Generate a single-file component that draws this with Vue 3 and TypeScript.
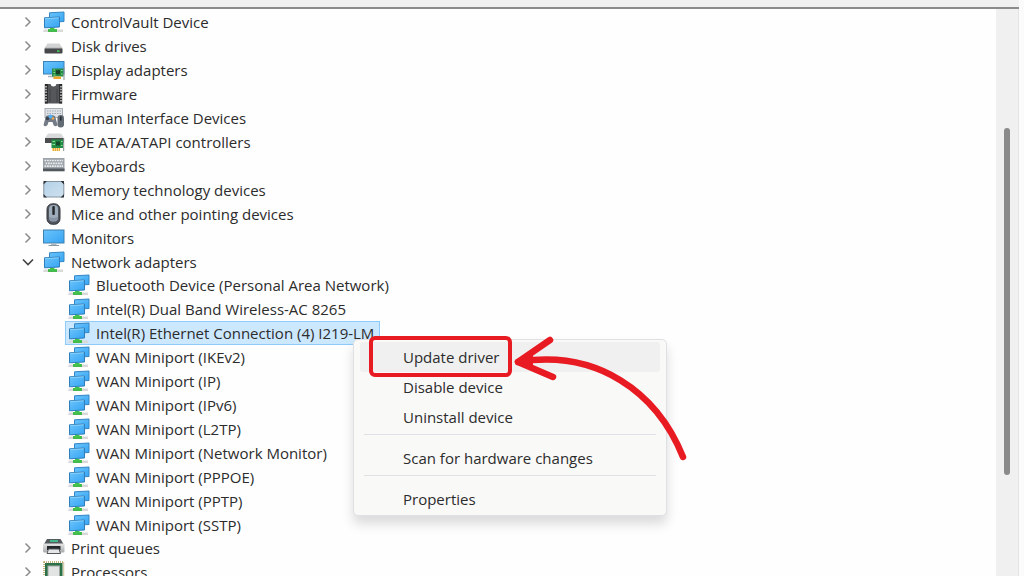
<script setup lang="ts">
import { ref } from 'vue'

interface Category {
  label: string
  icon: string
  children?: string[]
}

const categories: Category[] = [
  { label: 'ControlVault Device', icon: 'network' },
  { label: 'Disk drives', icon: 'disk' },
  { label: 'Display adapters', icon: 'display' },
  { label: 'Firmware', icon: 'firmware' },
  { label: 'Human Interface Devices', icon: 'hid' },
  { label: 'IDE ATA/ATAPI controllers', icon: 'ide' },
  { label: 'Keyboards', icon: 'keyboard' },
  { label: 'Memory technology devices', icon: 'memory' },
  { label: 'Mice and other pointing devices', icon: 'mouse' },
  { label: 'Monitors', icon: 'monitor' },
  {
    label: 'Network adapters',
    icon: 'network',
    children: [
      'Bluetooth Device (Personal Area Network)',
      'Intel(R) Dual Band Wireless-AC 8265',
      'Intel(R) Ethernet Connection (4) I219-LM',
      'WAN Miniport (IKEv2)',
      'WAN Miniport (IP)',
      'WAN Miniport (IPv6)',
      'WAN Miniport (L2TP)',
      'WAN Miniport (Network Monitor)',
      'WAN Miniport (PPPOE)',
      'WAN Miniport (PPTP)',
      'WAN Miniport (SSTP)',
    ],
  },
  { label: 'Print queues', icon: 'printer' },
  { label: 'Processors', icon: 'cpu' },
]

const menuGroups: string[][] = [
  ['Update driver', 'Disable device', 'Uninstall device'],
  ['Scan for hardware changes'],
  ['Properties'],
]

const expanded = ref<string[]>(['Network adapters'])
const selected = ref('Intel(R) Ethernet Connection (4) I219-LM')
const activeItem = ref('Update driver')

function isOpen(label: string): boolean {
  return expanded.value.includes(label)
}

function toggle(label: string): void {
  expanded.value = isOpen(label)
    ? expanded.value.filter((l) => l !== label)
    : [...expanded.value, label]
}
</script>

<template>
  <div class="window">
    <svg class="defs" width="0" height="0" aria-hidden="true">
      <defs>
        <linearGradient id="screen" x1="0" y1="0" x2="1" y2="1">
          <stop offset="0" stop-color="#6cc4fb" />
          <stop offset="1" stop-color="#35a4f4" />
        </linearGradient>
        <linearGradient id="metal" x1="0" y1="0" x2="0" y2="1">
          <stop offset="0" stop-color="#e6e6e6" />
          <stop offset="1" stop-color="#a9abad" />
        </linearGradient>
        <linearGradient id="glass" x1="0" y1="0" x2="1" y2="1">
          <stop offset="0" stop-color="#b3d0e6" />
          <stop offset="1" stop-color="#cfe2f0" />
        </linearGradient>
        <symbol id="network" viewBox="0 0 22 22">
          <path d="M1 18.5h19v2.5H0z" fill="#d9d9d9" />
          <path d="M6.500 1.800 21 1v9.500l-14.500.8z" fill="url(#screen)" stroke="#3487c4" stroke-width="1" />
          <path d="M1.500 6.800 16.500 6v10l-15 .8z" fill="url(#screen)" stroke="#2f7db9" stroke-width="1" />
          <path d="M2.300 7.500 15.800 6.800" stroke="#9bdcff" stroke-width=".8" />
          <path d="M7 17h4.500v1h2.500v2.800h-9V18h2z" fill="#43c24c" />
          <path d="M5 20.300h9" stroke="#3cb348" stroke-width="1" />
        </symbol>
        <symbol id="disk" viewBox="0 0 22 22">
          <path d="M4.500 8.500h12l3 4.500h-18z" fill="#d2d3d4" />
          <rect x="1.500" y="13" width="18" height="5.500" rx="1" fill="#46484a" />
          <path d="M2 13.300h17" stroke="#8a8c8e" stroke-width="1" />
          <rect x="14" y="15.300" width="2.500" height="1.500" fill="#4bd45b" />
        </symbol>
        <symbol id="display" viewBox="0 0 22 22">
          <rect x=".5" y="2.500" width="20.500" height="12.500" fill="url(#screen)" stroke="#3b82b8" />
          <path d="M5 17.500h7" stroke="#a8b3ba" stroke-width="1.500" />
          <rect x="9" y="9.500" width="11.500" height="8" fill="#278a45" />
          <rect x="13" y="11.200" width="4" height="4" fill="#173f26" />
          <path d="M10.500 11h1.500M10.500 13.500h1.500M10.500 16h2M18 11.500h1.500M18 15h1.500" stroke="#8fe39a" stroke-width="1" />
          <path d="M10.500 17.500h7.500v2.500h-7.500z" fill="#f0a92c" />
          <path d="M21 8v13" stroke="#8a8e91" stroke-width="1" />
        </symbol>
        <symbol id="firmware" viewBox="0 0 22 22">
          <path d="M2 1h5.500q.5 2.500 3 2.500T13.500 1H19v19.500H2z" fill="#55575a" />
          <path d="M3.300 1v19.500M17.700 1v19.500" stroke="#29292a" stroke-width="3" />
          <path d="M3 3v16M18 3v16" stroke="#d4d6d7" stroke-width="1.500" stroke-dasharray="1.500 1.300" />
          <path d="M7 6v13M14 6v13" stroke="#404244" stroke-width="1" />
        </symbol>
        <symbol id="hid" viewBox="0 0 22 22">
          <rect x="2" y="1.500" width="17.500" height="9" fill="#dfe3e7" stroke="#a7aeb5" />
          <path d="M4 4h14M4 6.500h14" stroke="#a2a9b1" stroke-width="1.200" stroke-dasharray="1.500 1" />
          <path d="M3 9q4.500-2 9 0l2.500 9q-2 2.500-4 0l-1-3H5.500l-1 3q-2.500 2.500-4 0z" fill="#737b86" />
          <circle cx="4.500" cy="11.500" r="1.800" fill="#3c444f" />
          <circle cx="7.500" cy="9.500" r="2" fill="#54adf0" />
          <circle cx="10" cy="11.500" r="1.200" fill="#f1a846" />
          <rect x="14.500" y="8" width="6.500" height="12.500" rx="3.200" fill="#626a74" />
          <path d="M17.800 9.500v4" stroke="#25292e" stroke-width="1.500" />
        </symbol>
        <symbol id="ide" viewBox="0 0 22 22">
          <path d="M5 2.500h13l3 4.500H2z" fill="#d8d9da" />
          <path d="M2 7h19v5H2z" fill="#4a4c4e" />
          <rect x="8.500" y="8.500" width="11.500" height="8.500" fill="#258c45" />
          <rect x="13" y="10.500" width="4" height="4" fill="#15492a" />
          <path d="M9.500 10.500H12M9.500 13.500H12M18 10.500h1.500M18 14.500h1.500" stroke="#88df98" stroke-width="1" />
          <path d="M9.500 18.500h8" stroke="#efaa30" stroke-width="3" stroke-dasharray="1.500 .5" />
          <path d="M20.700 7v13" stroke="#8d9194" stroke-width="1" />
        </symbol>
        <symbol id="keyboard" viewBox="0 0 22 22">
          <rect x="0" y="3" width="21.500" height="13" fill="#9da3a9" />
          <rect x="0" y="13.500" width="21.500" height="2.800" fill="#53585e" />
          <path d="M1.500 5.500h18.500M2.500 8.300h17M1.500 11.100h18.500" stroke="#e8ecef" stroke-width="1.700" stroke-dasharray="1.800 .7" />
        </symbol>
        <symbol id="memory" viewBox="0 0 22 22">
          <rect x=".8" y="2.500" width="20" height="15.500" rx="2" fill="url(#glass)" stroke="#8494a0" />
          <path d="M.5 5.500V2H4zM17.500 2h3.500v3.500zM.5 15v3.500H4zM17.500 18.500h3.500V15z" fill="#33373b" />
        </symbol>
        <symbol id="mouse" viewBox="0 0 22 22">
          <rect x="4" y=".8" width="13" height="20.500" rx="5.500" fill="#50555e" stroke="#34373d" />
          <rect x="6" y="2" width="9" height="16.500" rx="4" fill="#9eabbb" />
          <rect x="9.300" y="3" width="2.500" height="9" rx="1" fill="#24272b" />
          <path d="M6 14q4.500 2 9 0v2q-4.500 4-9 0z" fill="#8593a5" />
        </symbol>
        <symbol id="monitor" viewBox="0 0 22 22">
          <rect x=".5" y="3" width="20.500" height="13" fill="url(#screen)" stroke="#3f7fae" />
          <path d="M8 17.200h5.500" stroke="#a9b7c0" stroke-width="1.500" />
          <path d="M5.500 18.500h10.500" stroke="#8799a5" stroke-width="1" />
        </symbol>
        <symbol id="printer" viewBox="0 0 22 22">
          <path d="M4 2h13.500l3 5H1z" fill="#565b5f" />
          <path d="M7 4h8" stroke="#43b78a" stroke-width="2" />
          <rect x="0" y="6.500" width="21.500" height="9" rx="1" fill="url(#metal)" />
          <path d="M4 9h13.500v4H4z" fill="#25282b" />
          <path d="M5.500 12h10.500l1.500 4.500H4z" fill="#e4e6e8" stroke="#55595d" stroke-width="1" />
        </symbol>
        <symbol id="cpu" viewBox="0 0 22 22">
          <rect x="1" y="1" width="19.500" height="20" fill="none" stroke="#b59d5e" stroke-width="1.500" stroke-dasharray="1 1" />
          <rect x="2" y="2" width="17.500" height="18.500" fill="#2c7048" />
          <rect x="5" y="5" width="11.500" height="12.500" fill="#e2e4e4" stroke="#a2aaa5" />
        </symbol>
      </defs>
    </svg>

    <header class="toolbar-edge"></header>
    <div class="body">
      <main class="pane">
        <ul class="tree" aria-label="Devices">
          <li v-for="cat in categories" :key="cat.label">
            <div class="row">
              <button
                class="chevron"
                type="button"
                :aria-label="cat.label"
                :aria-expanded="isOpen(cat.label)"
                @click="toggle(cat.label)"
              >
                <svg width="12" height="12" viewBox="0 0 12 12" fill="none">
                  <path v-if="isOpen(cat.label)" d="M1 3.500 6 8.500l5-5" stroke="#444" stroke-width="1.600" />
                  <path v-else d="M3.500 1.500 8 6l-4.500 4.500" stroke="#8c8c8c" stroke-width="1.500" />
                </svg>
              </button>
              <svg class="icon" width="22" height="22" aria-hidden="true"><use :href="'#' + cat.icon" /></svg>
              <span>{{ cat.label }}</span>
            </div>
            <ul v-if="cat.children && isOpen(cat.label)" class="children">
              <li v-for="device in cat.children" :key="device">
                <button
                  type="button"
                  class="device"
                  :class="{ selected: device === selected }"
                  @click="selected = device"
                >
                  <svg class="icon" width="22" height="22" aria-hidden="true"><use href="#network" /></svg>
                  <span>{{ device }}</span>
                </button>
              </li>
            </ul>
          </li>
        </ul>
      </main>
      <div class="scrollbar"><div class="thumb"></div></div>
    </div>

    <div class="menu" role="menu">
      <div v-for="(group, i) in menuGroups" :key="i" class="menu-group" role="group">
        <button
          v-for="item in group"
          :key="item"
          type="button"
          role="menuitem"
          class="menu-item"
          :class="{ active: item === activeItem }"
          @mouseenter="activeItem = item"
        >
          {{ item }}
        </button>
      </div>
    </div>

    <svg class="annotation" width="324" height="132" viewBox="0 0 324 132" fill="none" aria-hidden="true">
      <rect x="6" y="6" width="139" height="37" rx="4" stroke="#e81b22" stroke-width="4" />
      <g stroke="#e81b22" stroke-width="6.500" stroke-linecap="round" stroke-linejoin="round">
        <path d="M153 30C232 17 292 60 318 125" />
        <path d="M185 8 153 30l35 15" />
      </g>
      <path d="M152 29l16-8v14z" fill="#e81b22" />
    </svg>
  </div>
</template>

<style>
body {
  margin: 0;
  background: #fbfbfb;
}
</style>

<style scoped>
.window {
  position: relative;
  display: flex;
  flex-direction: column;
  height: 100vh;
  overflow: hidden;
  box-sizing: border-box;
  padding-right: 5px;
  font: 15px/24px 'Open Sans', 'Noto Sans', sans-serif;
  color: #2c2c2c;
}

.defs {
  position: absolute;
}

button {
  margin: 0;
  padding: 0;
  border: 0;
  background: none;
  font: inherit;
  color: inherit;
  text-align: left;
}

.toolbar-edge {
  flex: none;
  height: 7px;
  background: #f0f0f0;
  border-bottom: 2px solid #8b8b8b;
}

.body {
  flex: 1;
  display: flex;
  min-height: 0;
  border-right: 1px solid #e4e4e4;
}

.pane {
  flex: 1;
  min-width: 0;
  overflow: hidden;
  background: #fefefe;
}

.tree,
.children {
  list-style: none;
  margin: 0;
  padding: 0;
}

.tree {
  padding-top: 1px;
}

.children {
  margin: -1px 0;
  padding-left: 65px;
}

.row {
  display: flex;
  align-items: center;
  height: 24px;
  padding-left: 20px;
  white-space: nowrap;
}

.chevron {
  display: flex;
  align-items: center;
  justify-content: center;
  width: 16px;
  height: 24px;
  margin-right: 7px;
}

.icon {
  flex: none;
  margin-right: 6px;
}

.device {
  display: flex;
  align-items: center;
  box-sizing: border-box;
  height: 24px;
  padding: 0 5px 0 2px;
  border: 1px solid transparent;
  line-height: 22px;
  white-space: nowrap;
}

.device.selected {
  background: #cce8ff;
  border-color: #8ecbfa;
}

.scrollbar {
  display: grid;
  grid-template-rows: 119fr 347fr 101fr;
  width: 22px;
  background: #f0f0f0;
}

.thumb {
  grid-row: 2;
  justify-self: center;
  width: 6px;
  border-radius: 3px;
  background: #8a8a8a;
}

.menu {
  position: absolute;
  left: 353px;
  top: 339px;
  width: 314px;
  box-sizing: border-box;
  padding: 2px 6px 1px;
  border: 1px solid #dfe0e3;
  border-radius: 5px;
  background: #f9f9f8;
  box-shadow: 0 8px 12px rgba(0, 0, 0, 0.14);
}

.menu-group + .menu-group {
  position: relative;
  padding-top: 11px;
}

.menu-group + .menu-group::before {
  content: '';
  position: absolute;
  top: 2px;
  left: 4px;
  right: 4px;
  height: 1px;
  background: #e0e0e6;
}

.menu-item {
  display: block;
  width: 100%;
  height: 30px;
  padding-left: 43px;
  border-radius: 3px;
}

.menu-item.active {
  background: #f0f0f0;
}

.annotation {
  position: absolute;
  left: 365px;
  top: 332px;
  pointer-events: none;
}
</style>
